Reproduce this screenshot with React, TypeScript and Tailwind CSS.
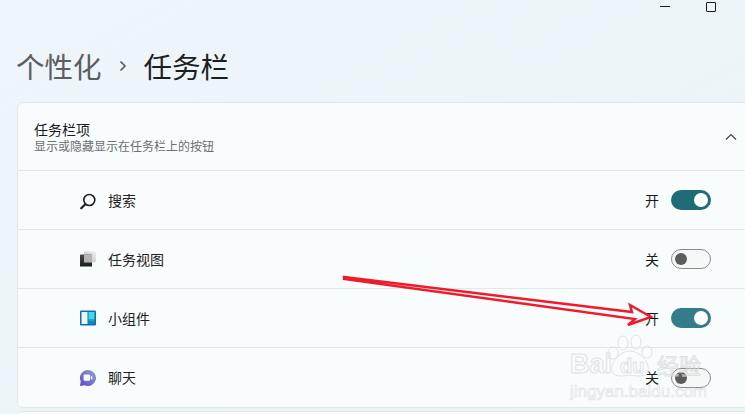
const cjk = "font-['Noto_Sans_CJK_SC','Noto_Sans',sans-serif]";

function SearchIcon() {
  return (
    <svg className="shrink-0" width="20" height="20" viewBox="0 0 20 20" fill="none" stroke="#1f1f1f">
      <circle cx="11.3" cy="10" r="5.5" strokeWidth="1.6" />
      <path d="M7.3 14.2 L3.2 18.2" strokeWidth="2.2" strokeLinecap="round" />
    </svg>
  );
}

function TaskViewIcon() {
  return (
    <svg width="16" height="16" viewBox="0 0 16 16">
      <defs>
        <linearGradient id="tvBack" x1="0" y1="1" x2="1" y2="0">
          <stop offset="0" stopColor="#b9b9b9" />
          <stop offset="1" stopColor="#f0f0f3" />
        </linearGradient>
        <linearGradient id="tvFront" x1="0" y1="0" x2="0" y2="1">
          <stop offset="0" stopColor="#4a4a4a" />
          <stop offset="1" stopColor="#1c1c1c" />
        </linearGradient>
      </defs>
      <rect x="4" y="0.5" width="12" height="11" rx="1" fill="url(#tvBack)" />
      <rect x="0" y="3.5" width="12" height="12" rx="0.5" fill="url(#tvFront)" />
      <rect x="4" y="3.5" width="8" height="8" fill="#b4b4b4" />
    </svg>
  );
}

function WidgetsIcon() {
  return (
    <svg width="16" height="16" viewBox="0 0 16 16">
      <rect x="0" y="0.5" width="16" height="15" rx="1" fill="#0f6cbd" />
      <rect x="1.5" y="2" width="6" height="12" fill="#eef4fb" />
      <rect x="8.5" y="2" width="6" height="7" fill="#3fdde0" />
      <rect x="8.5" y="9" width="6" height="2.5" fill="#19a9c0" />
      <rect x="8.5" y="11.5" width="6" height="2.5" fill="#1289b0" />
    </svg>
  );
}

function ChatIcon() {
  return (
    <svg width="16" height="16" viewBox="0 0 16 16">
      <defs>
        <linearGradient id="chatFill" x1="0" y1="1" x2="1" y2="0">
          <stop offset="0" stopColor="#5a4fc0" />
          <stop offset="1" stopColor="#8f9de6" />
        </linearGradient>
      </defs>
      <path d="M8 0 A8 8 0 1 1 4.5 15.2 L0.6 16 L0 15.5 L0.8 11.6 A8 8 0 0 1 8 0 Z" fill="url(#chatFill)" />
      <rect x="3.6" y="4.6" width="6.4" height="6.2" rx="1" fill="#fff" />
      <path d="M10.6 6.8 L12.4 5.4 V10 L10.6 8.8 Z" fill="#fff" opacity="0.85" />
    </svg>
  );
}

function Toggle({ on, tone }: { on: boolean; tone?: string }) {
  if (on) {
    return (
      <div className={`flex h-5 w-10 items-center justify-end rounded-full pr-[3px] ${tone}`}>
        <div className="h-3.5 w-3.5 rounded-full bg-white" />
      </div>
    );
  }
  return (
    <div className="flex h-5 w-10 items-center rounded-full border border-[#8b8b8b] bg-[#f6f7f7] pl-[3px]">
      <div className="h-3 w-3 rounded-full bg-[#5c5c5c]" />
    </div>
  );
}

const rows = [
  { label: '搜索', icon: <SearchIcon />, on: true, tone: 'bg-[#1f6b78]' },
  { label: '任务视图', icon: <TaskViewIcon />, on: false },
  { label: '小组件', icon: <WidgetsIcon />, on: true, tone: 'bg-[#347b8b]' },
  { label: '聊天', icon: <ChatIcon />, on: false },
];

export default function App() {
  return (
    <div className={`relative h-[414px] w-[745px] overflow-hidden bg-gradient-to-br from-[#eef5fb] to-[#eaf4f6] ${cjk}`}>
      {/* window controls */}
      <div className="flex h-[12px] items-start justify-end gap-9 pt-[2px] pr-[29px]">
        <div className="mt-[4px] h-px w-[10px] bg-[#1a1a1a]" />
        <div className="h-[10px] w-[10px] rounded-[1px] border border-[#1a1a1a]" />
      </div>

      {/* breadcrumb */}
      <div className="mt-[32px] flex h-[43px] items-center pl-[16px] text-[28.5px] leading-[42px]">
        <span className="text-[#5b5e60]">个性化</span>
        <svg className="mx-[14px]" width="14" height="14" viewBox="0 0 14 14" fill="none" stroke="#55585a" strokeWidth="1.6">
          <path d="M4.5 2.5 L9 7 L4.5 11.5" />
        </svg>
        <span className="text-[#1c1e20]">任务栏</span>
      </div>

      {/* card */}
      <div className="mt-[15px] ml-[17px] -mr-2 rounded-md border border-[#e1e8ec] bg-[#f9fcfd]">
        <div className="flex h-[68px] items-center justify-between border-b border-[#e1e8ea] pr-[7px] pl-4">
          <div>
            <div className="text-sm leading-[18px] text-[#1b1b1b]">任务栏项</div>
            <div className="text-xs leading-[16px] text-[#6c6f71]">显示或隐藏显示在任务栏上的按钮</div>
          </div>
          <svg className="mr-[8px]" width="12" height="8" viewBox="0 0 12 8" fill="none" stroke="#444" strokeWidth="1.2">
            <path d="M1 6.5 L6 1.5 L11 6.5" />
          </svg>
        </div>
        {rows.map((row) => (
          <div key={row.label} className="flex h-[59px] items-center border-b border-[#e1e8ea] pr-[41px] pl-[62px] last:border-b-0">
            <div className="flex h-4 w-4 items-center justify-center">{row.icon}</div>
            <span className="ml-3 flex-1 text-[14px] text-[#222]">{row.label}</span>
            <span className="mr-3 text-[14px] text-[#1b1b1b]">{row.on ? '开' : '关'}</span>
            <Toggle on={row.on} tone={row.tone} />
          </div>
        ))}
      </div>

      {/* next card peeking at the bottom */}
      <div className="mt-[3px] ml-[17px] -mr-2 h-6 rounded-md border border-[#e1e8ec] bg-[#f9fcfd]" />

      {/* red annotation arrow */}
      <svg className="absolute top-0 left-0" width="745" height="414" fill="none">
        <path
          d="M344 277 L632 312 L630 305 L651 317 L628 325 L635 319 L344 279 Z"
          stroke="#ee1c2a"
          strokeWidth="2.4"
          strokeLinejoin="miter"
        />
      </svg>

      {/* watermark */}
      <div className="absolute top-[333px] left-[570px] h-[70px] w-[140px] font-['Liberation_Sans',sans-serif] opacity-70">
        <svg className="absolute top-0 left-[34px]" width="54" height="46" viewBox="0 0 54 46" fill="#ffffff" fillOpacity="0.4" stroke="#d6d9db" strokeWidth="1">
          <ellipse cx="19" cy="10" rx="5" ry="7" />
          <ellipse cx="32" cy="9" rx="5" ry="7" />
          <ellipse cx="9" cy="20" rx="5" ry="6" />
          <ellipse cx="43" cy="19" rx="5" ry="6" />
          <path d="M26 18 C36 18 46 30 44 38 C42 45 32 43 26 42 C20 43 10 45 8 38 C6 30 16 18 26 18 Z" />
        </svg>
        <span className="absolute top-[16px] left-0 text-[27px] leading-[30px] font-bold text-white/60 [-webkit-text-stroke:1px_#d3d6d8]">Bai</span>
        <span className="absolute top-[22px] left-[50px] text-[20px] leading-[22px] font-bold text-white/60 [-webkit-text-stroke:1px_#d3d6d8]">du</span>
        <span className={`absolute top-[17px] left-[87px] text-[22px] leading-[28px] text-white/60 [-webkit-text-stroke:1px_#d3d6d8] ${cjk}`}>经验</span>
        <span className="absolute top-[49px] left-0 text-[17px] leading-[20px] whitespace-nowrap text-white/50 [-webkit-text-stroke:0.7px_#d6d9db]">jingyan.baidu.com</span>
      </div>
    </div>
  );
}
